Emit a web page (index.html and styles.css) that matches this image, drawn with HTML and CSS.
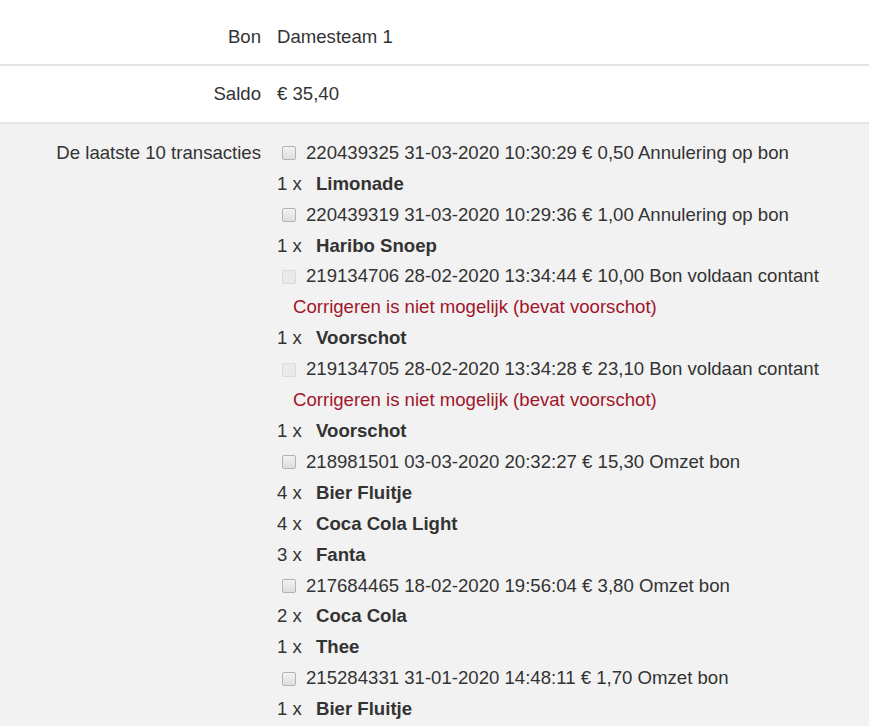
FILE: index.html
```html
<!DOCTYPE html>
<html lang="nl">
<head>
<meta charset="utf-8">
<title>Bon</title>
<link rel="stylesheet" href="styles.css">
</head>
<body>
<div class="form">
  <div class="row first">
    <div class="label">Bon</div>
    <div class="value">Damesteam 1</div>
  </div>
  <div class="row second">
    <div class="label">Saldo</div>
    <div class="value">€ 35,40</div>
  </div>
  <div class="row grey">
    <div class="label">De laatste 10 transacties</div>
    <div class="value">
      <div class="trx"><span class="cb"></span>220439325 31-03-2020 10:30:29 € 0,50 Annulering op bon</div>
      <div class="item"><span class="qty">1 x</span><span class="name">Limonade</span></div>
      <div class="trx"><span class="cb"></span>220439319 31-03-2020 10:29:36 € 1,00 Annulering op bon</div>
      <div class="item"><span class="qty">1 x</span><span class="name">Haribo Snoep</span></div>
      <div class="trx"><span class="cb disabled"></span>219134706 28-02-2020 13:34:44 € 10,00 Bon voldaan contant</div>
      <div class="error">Corrigeren is niet mogelijk (bevat voorschot)</div>
      <div class="item"><span class="qty">1 x</span><span class="name">Voorschot</span></div>
      <div class="trx"><span class="cb disabled"></span>219134705 28-02-2020 13:34:28 € 23,10 Bon voldaan contant</div>
      <div class="error">Corrigeren is niet mogelijk (bevat voorschot)</div>
      <div class="item"><span class="qty">1 x</span><span class="name">Voorschot</span></div>
      <div class="trx"><span class="cb"></span>218981501 03-03-2020 20:32:27 € 15,30 Omzet bon</div>
      <div class="item"><span class="qty">4 x</span><span class="name">Bier Fluitje</span></div>
      <div class="item"><span class="qty">4 x</span><span class="name">Coca Cola Light</span></div>
      <div class="item"><span class="qty">3 x</span><span class="name">Fanta</span></div>
      <div class="trx"><span class="cb"></span>217684465 18-02-2020 19:56:04 € 3,80 Omzet bon</div>
      <div class="item"><span class="qty">2 x</span><span class="name">Coca Cola</span></div>
      <div class="item"><span class="qty">1 x</span><span class="name">Thee</span></div>
      <div class="trx"><span class="cb"></span>215284331 31-01-2020 14:48:11 € 1,70 Omzet bon</div>
      <div class="item"><span class="qty">1 x</span><span class="name">Bier Fluitje</span></div>
    </div>
  </div>
</div>
</body>
</html>
```
FILE: styles.css
```css
html, body {
  margin: 0;
  padding: 0;
  background: #ffffff;
}
body {
  font-family: "Liberation Sans", Arial, sans-serif;
  font-size: 18.6px;
  line-height: 30.9px;
  color: #333333;
}
.form {
  display: flex;
  flex-direction: column;
}
.row {
  display: grid;
  grid-template-columns: 261px 1fr;
  column-gap: 16px;
  padding: 12.5px 0;
  border-top: 2px solid #e4e4e4;
}
.row.first {
  border-top: none;
  padding: 21.5px 0 11.5px;
}
.row.second {
  padding: 13.5px 0 11.5px;
}
.row.grey {
  background: #f2f2f2;
  padding: 14px 0 20px;
  min-height: 600px;
}
.label {
  text-align: right;
}
.value {
  display: flex;
  flex-direction: column;
}
.trx {
  display: flex;
  align-items: center;
  white-space: nowrap;
}
.cb {
  display: inline-block;
  box-sizing: border-box;
  width: 14px;
  height: 14px;
  margin: 0 10px 0 5px;
  border: 1px solid #b3b3b3;
  border-radius: 2px;
  background: linear-gradient(#f2f2f2, #dedede);
}
.cb.disabled {
  border-color: #dadada;
  background: #eaeaea;
}
.error {
  color: #a0162a;
  padding-left: 16px;
}
.item {
  display: flex;
}
.qty {
  width: 39px;
}
.name {
  font-weight: bold;
}
```
